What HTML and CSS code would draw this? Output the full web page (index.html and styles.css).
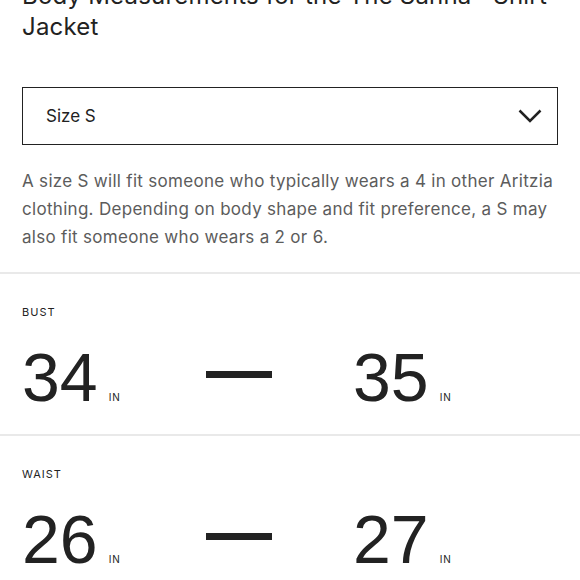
FILE: index.html
```html
<!DOCTYPE html>
<html lang="en">
<head>
    <meta charset="UTF-8">
    <meta name="viewport" content="width=device-width, initial-scale=1.0">
    <title>Body Measurements</title>
    <link rel="stylesheet" href="styles.css">
</head>
<body>
<div class="intro">
    <h2 class="title">Body Measurements for the The Sanna™ Shirt Jacket</h2>
    <div class="size-select">
        <span>Size S</span>
        <svg class="chevron" width="24" height="14" viewBox="0 0 24 14">
            <path d="M1.5 1.5 L12 12 L22.5 1.5" fill="none" stroke="#222" stroke-width="2.5"/>
        </svg>
    </div>
    <p class="fit-note">A size S will fit someone who typically wears a 4 in other Aritzia clothing. Depending on body shape and fit preference, a S may also fit someone who wears a 2 or 6.</p>
</div>

<div class="measure">
    <div class="measure-label">BUST</div>
    <div class="measure-row">
        <div class="value"><span class="num">34</span><span class="unit">IN</span></div>
        <span class="dash"></span>
        <div class="value"><span class="num">35</span><span class="unit">IN</span></div>
    </div>
</div>

<div class="measure">
    <div class="measure-label">WAIST</div>
    <div class="measure-row">
        <div class="value"><span class="num">26</span><span class="unit">IN</span></div>
        <span class="dash"></span>
        <div class="value"><span class="num">27</span><span class="unit">IN</span></div>
    </div>
</div>
</body>
</html>
```

FILE: styles.css
```css
:root {
    --text-color: #222;
    --muted-color: #5c5c5c;
    --line-color: #e9e9e9;
}

body {
    margin: 0;
    font-family: 'Inter', 'Liberation Sans', sans-serif;
    color: var(--text-color);
    background: #fff;
}

.intro {
    padding: 0 22px 21px;
}

.title {
    margin: -20px 0 0;
    font-size: 24px;
    line-height: 31px;
    font-weight: 400;
    letter-spacing: 0.2px;
}

.size-select {
    margin-top: 45px;
    height: 56px;
    border: 1.5px solid var(--text-color);
    display: flex;
    align-items: center;
    justify-content: space-between;
    padding: 0 15px 0 23px;
    font-size: 17px;
}

.chevron {
    display: block;
}

.fit-note {
    margin: 22px 0 0;
    font-size: 17px;
    line-height: 28px;
    letter-spacing: 0.3px;
    color: var(--muted-color);
}

.measure {
    border-top: 2px solid var(--line-color);
    padding: 31px 22px 24px;
    height: 105px;
}

.measure-label {
    font-size: 11px;
    line-height: 14px;
    letter-spacing: 1px;
}

.measure-row {
    margin-top: 24px;
    display: grid;
    grid-template-columns: 184px 147px auto;
    align-items: center;
    height: 68px;
}

.value {
    display: flex;
    align-items: baseline;
    gap: 11px;
}

.num {
    font-family: 'Liberation Sans', sans-serif;
    font-size: 68px;
    line-height: 68px;
}

.unit {
    font-size: 10px;
    letter-spacing: 1px;
}

.dash {
    display: block;
    width: 66px;
    height: 7px;
    background: var(--text-color);
    margin-bottom: 6px;
}
```
